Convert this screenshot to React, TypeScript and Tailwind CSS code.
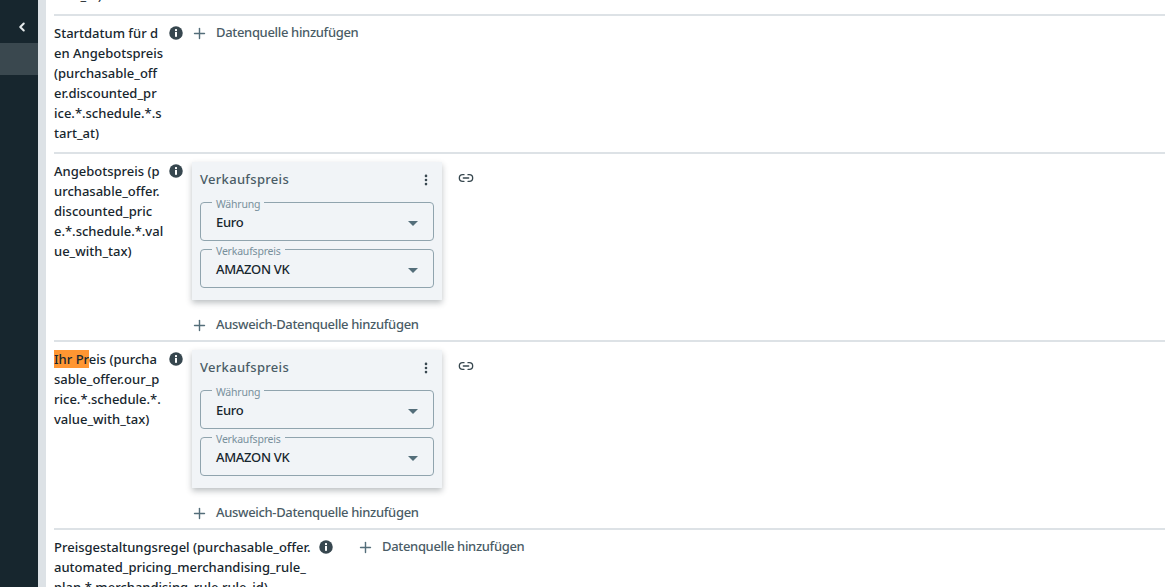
import { ChevronLeft, EllipsisVertical, Link2, Plus } from 'lucide-react';
import { ReactNode } from 'react';

const InfoDot = () => (
  <svg width="14" height="14" viewBox="0 0 14 14" className="mt-[3px] ml-[7px] mr-[9px] shrink-0">
    <circle cx="7" cy="7" r="6.75" fill="#37474f" />
    <rect x="6" y="6" width="2" height="4.8" fill="#fff" />
    <rect x="6" y="3.1" width="2" height="2" fill="#fff" />
  </svg>
);

const AddSource = ({ label }: { label: string }) => (
  <button className="flex items-center h-5 text-[13px] font-medium tracking-[-0.33px] text-[#4a5c66]">
    <Plus size={17} strokeWidth={2} className="-ml-[1px] text-[#546e7a]" />
    <span className="ml-2">{label}</span>
  </button>
);

const SelectField = ({ label, value }: { label: string; value: string }) => (
  <fieldset className="h-[43px] border border-[#90a4ae] rounded-[4px] pl-[11px] pr-[15px]">
    <legend className="text-[10.5px] leading-[13px] tracking-[-0.2px] h-2 px-[4px] text-[#78909c] font-normal">{label}</legend>
    <div className="flex items-center justify-between h-[34px] pl-[4px]">
      <span className="text-[13px] font-medium tracking-[-0.3px] text-[#17262e]">{value}</span>
      <span className="w-0 h-0 border-x-[5px] border-x-transparent border-t-[5px] border-t-[#546e7a]" />
    </div>
  </fieldset>
);

const SourceCard = () => (
  <div className="flex items-start">
    <div className="w-[250px] h-[138px] bg-[#f1f4f7] px-2 pt-2 shadow-[0_3px_6px_rgba(38,50,56,0.3)]">
      <div className="flex items-center justify-between h-5 mb-2">
        <span className="text-[13px] font-medium text-[#4a5c66] tracking-[0.3px]">Verkaufspreis</span>
        <EllipsisVertical size={14} strokeWidth={2.5} className="text-[#37474f] mr-[1px]" />
      </div>
      <div className="flex flex-col gap-1">
        <SelectField label="Währung" value="Euro" />
        <SelectField label="Verkaufspreis" value="AMAZON VK" />
      </div>
    </div>
    <Link2 size={16} strokeWidth={2} className="ml-4 mt-2 text-[#37474f]" />
  </div>
);

const Row = ({ lines, children, height, labelWidth = 'w-[108px]' }: { lines: ReactNode[]; children: ReactNode; height: string; labelWidth?: string }) => (
  <div className={`flex border-b-2 border-[#dde2e6] ${height}`}>
    <div className={`${labelWidth} shrink-0 text-[13px] leading-5 font-medium text-[#17262e] whitespace-nowrap`}>
      {lines.map((line, i) => (
        <div key={i}>{line}</div>
      ))}
    </div>
    <InfoDot />
    <div className="flex-1 min-w-0">{children}</div>
  </div>
);

const PriceSource = () => (
  <div className="pt-px">
    <SourceCard />
    <div className="mt-[15px]">
      <AddSource label="Ausweich-Datenquelle hinzufügen" />
    </div>
  </div>
);

export default function App() {
  return (
    <div className="flex h-[587px] w-[1165px] overflow-hidden bg-white font-['Noto_Sans',sans-serif]">
      <aside className="w-[38px] shrink-0 bg-[#17262e]">
        <div className="flex h-[43px] items-center pl-[15px] pt-[11px]">
          <ChevronLeft size={14} strokeWidth={3.5} className="text-[#e6eaec]" />
        </div>
        <div className="h-8 bg-[#3a484f]" />
      </aside>
      <main className="flex-1 border-l-8 border-[#dde2e6] pl-2">
        <div className="-mt-[17px] h-[33px] border-b-2 border-[#dde2e6] pl-[2px] text-[13px] leading-5 font-medium text-[#17262e]">
          <div className="h-[2px]" />
          <div>rule_id)</div>
        </div>
        <Row
          height="h-[138px] pt-[7px]"
          lines={['Startdatum für d', 'en Angebotspreis', '(purchasable_off', 'er.discounted_pr', 'ice.*.schedule.*.s', 'tart_at)']}
        >
          <AddSource label="Datenquelle hinzufügen" />
        </Row>
        <Row
          height="h-[188px] pt-[7px]"
          lines={['Angebotspreis (p', 'urchasable_offer.', 'discounted_pric', 'e.*.schedule.*.val', 'ue_with_tax)']}
        >
          <PriceSource />
        </Row>
        <Row
          height="h-[188px] pt-[7px]"
          lines={[
            <>
              <mark className="bg-[#ff9632] text-[#17262e]">Ihr Pr</mark>eis (purcha
            </>,
            'sable_offer.our_p',
            'rice.*.schedule.*.',
            'value_with_tax)',
          ]}
        >
          <PriceSource />
        </Row>
        <Row
          height="h-[80px] pt-[7px]"
          labelWidth="w-[258px]"
          lines={['Preisgestaltungsregel (purchasable_offer.', 'automated_pricing_merchandising_rule_', 'plan.*.merchandising_rule.rule_id)']}
        >
          <div className="pl-4">
            <AddSource label="Datenquelle hinzufügen" />
          </div>
        </Row>
      </main>
    </div>
  );
}
